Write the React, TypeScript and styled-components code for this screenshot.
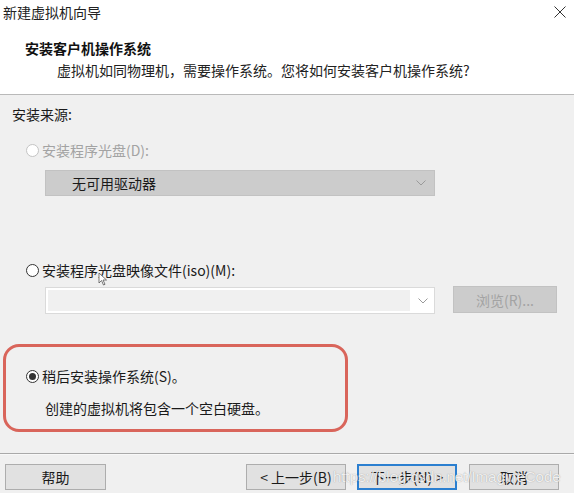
import React from "react";
import styled, { createGlobalStyle } from "styled-components";

const Global = createGlobalStyle`
  html, body { margin: 0; padding: 0; background: #f0f0f0; }
  body {
    font-family: "Noto Sans CJK SC", "Liberation Sans", sans-serif;
    font-size: 14px;
    color: #1a1a1a;
  }
  * { box-sizing: border-box; }
`;

const Window = styled.div`
  position: relative;
  width: 574px;
  height: 493px;
  display: flex;
  flex-direction: column;
  background: #f0f0f0;
  overflow: hidden;
`;

const Header = styled.div`
  height: 95px;
  background: #ffffff;
  display: flex;
  flex-direction: column;
  border-bottom: 1px solid #b9b9b9;
`;

const TitleBar = styled.div`
  height: 24px;
  display: flex;
  align-items: center;
  justify-content: space-between;
  padding: 0 8px 0 3px;
`;

const TitleText = styled.span`
  font-size: 14px;
  line-height: 18px;
  color: #222;
`;

const Heading = styled.div`
  margin-top: 14px;
  padding-left: 25px;
  font-size: 14px;
  font-weight: bold;
  line-height: 20px;
  color: #111;
`;

const Subtitle = styled.div`
  margin-top: 3px;
  padding-left: 57px;
  line-height: 18px;
  color: #222;
`;

const Body = styled.div`
  display: flex;
  flex-direction: column;
  flex: 1;
`;

const SectionLabel = styled.div`
  margin-top: 10px;
  padding-left: 12px;
  line-height: 18px;
`;

const OptionRow = styled.label<{ $mt: number; $pl?: number; $disabled?: boolean }>`
  display: flex;
  align-items: center;
  gap: 3px;
  margin-top: ${(p) => p.$mt}px;
  padding-left: ${(p) => p.$pl ?? 26}px;
  line-height: 18px;
  color: ${(p) => (p.$disabled ? "#a3a3a3" : "#1a1a1a")};
`;

const Radio = styled.span<{ $checked?: boolean; $disabled?: boolean }>`
  width: 13px;
  height: 13px;
  flex: none;
  border-radius: 50%;
  background: #fff;
  border: 1px solid ${(p) => (p.$disabled ? "#c4c4c4" : "#333")};
  display: flex;
  align-items: center;
  justify-content: center;
  &::after {
    content: "";
    width: 7px;
    height: 7px;
    border-radius: 50%;
    background: ${(p) => (p.$checked ? "#333" : "transparent")};
  }
`;

const Select = styled.div`
  margin: 11px 0 0 45px;
  width: 390px;
  height: 26px;
  display: flex;
  align-items: center;
  justify-content: space-between;
  padding: 0 8px 0 26px;
  background: #cccccc;
  border: 1px solid #c2c2c2;
  color: #1a1a1a;
`;

const ComboRow = styled.div`
  display: flex;
  align-items: flex-start;
  margin-top: 8px;
  padding-left: 45px;
`;

const Combo = styled.div`
  width: 390px;
  height: 27px;
  display: flex;
  align-items: stretch;
  background: #fff;
  border: 1px solid #dadada;
  padding: 2px;
`;

const ComboField = styled.div`
  flex: 1;
  background: #f0f0f0;
  margin-right: 4px;
`;

const ComboArrow = styled.div`
  width: 18px;
  display: flex;
  align-items: center;
  justify-content: center;
`;

const BrowseButton = styled.div`
  margin: -1px 0 0 18px;
  width: 104px;
  height: 27px;
  display: flex;
  align-items: center;
  justify-content: center;
  background: #cccccc;
  border: 1px solid #c2c2c2;
  color: #a3a3a3;
`;

const Highlight = styled.div`
  margin: 30px 0 0 3px;
  width: 345px;
  height: 88px;
  border: 3px solid #d9655b;
  border-radius: 16px;
  display: flex;
  flex-direction: column;
  padding-top: 20px;
`;

const Note = styled.div`
  margin-top: 14px;
  padding-left: 39px;
  line-height: 18px;
`;

const Divider = styled.div`
  margin-top: 21px;
  height: 2px;
  border-top: 1px solid #a9a9a9;
  border-bottom: 1px solid #f8f8f8;
`;

const Footer = styled.div`
  display: flex;
  margin-top: 9px;
  padding: 0 15px 0 5px;
`;

const Button = styled.div<{ $w: number; $ml?: number; $primary?: boolean }>`
  width: ${(p) => p.$w}px;
  height: 26px;
  margin-left: ${(p) => p.$ml ?? 0}px;
  display: flex;
  align-items: center;
  justify-content: center;
  background: #e1e1e1;
  border: ${(p) => (p.$primary ? "2px solid #2b7fd0" : "1px solid #adadad")};
  color: #1a1a1a;
  line-height: 18px;
`;

const Watermark = styled.div`
  position: absolute;
  left: 333px;
  top: 468px;
  font-family: "Liberation Sans", sans-serif;
  font-size: 15px;
  line-height: 18px;
  color: rgba(255, 255, 255, 0.85);
  text-shadow: 0 0 1px rgba(110, 110, 110, 0.7);
  white-space: nowrap;
  pointer-events: none;
`;

const Cursor = styled.svg`
  position: absolute;
  left: 98px;
  top: 272px;
`;

const Chevron = ({ color = "#9a9a9a" }: { color?: string }) => (
  <svg width="10" height="6" viewBox="0 0 10 6">
    <path d="M0.5 0.5 L5 5 L9.5 0.5" fill="none" stroke={color} strokeWidth="1" />
  </svg>
);

export default function App() {
  return (
    <>
      <Global />
      <Window>
        <Header>
          <TitleBar>
            <TitleText>新建虚拟机向导</TitleText>
            <svg width="12" height="12" viewBox="0 0 12 12">
              <path d="M0.5 0.5 L11.5 11.5 M11.5 0.5 L0.5 11.5" stroke="#333" strokeWidth="1" />
            </svg>
          </TitleBar>
          <Heading>安装客户机操作系统</Heading>
          <Subtitle>虚拟机如同物理机，需要操作系统。您将如何安装客户机操作系统?</Subtitle>
        </Header>
        <Body>
          <SectionLabel>安装来源:</SectionLabel>
          <OptionRow $mt={18} $disabled>
            <Radio $disabled />
            安装程序光盘(D):
          </OptionRow>
          <Select>
            <span>无可用驱动器</span>
            <Chevron />
          </Select>
          <OptionRow $mt={65}>
            <Radio />
            安装程序光盘映像文件(iso)(M):
          </OptionRow>
          <ComboRow>
            <Combo>
              <ComboField />
              <ComboArrow>
                <Chevron />
              </ComboArrow>
            </Combo>
            <BrowseButton>浏览(R)...</BrowseButton>
          </ComboRow>
          <Highlight>
            <OptionRow $mt={0} $pl={20}>
              <Radio $checked />
              稍后安装操作系统(S)。
            </OptionRow>
            <Note>创建的虚拟机将包含一个空白硬盘。</Note>
          </Highlight>
          <Divider />
          <Footer>
            <Button $w={101}>帮助</Button>
            <Button $w={100} $ml={140}>&lt; 上一步(B)</Button>
            <Button $w={100} $ml={11} $primary>下一步(N) &gt;</Button>
            <Button $w={90} $ml={12}>取消</Button>
          </Footer>
        </Body>
        <Cursor width="10" height="14" viewBox="0 0 10 14">
          <path d="M1 1 L1 11 L3.5 8.5 L5.5 13 L7 12.3 L5 8 L8.5 8 Z" fill="#fff" stroke="#555" strokeWidth="0.8" />
        </Cursor>
        <Watermark>https://blog.csdn.net/ImagineCode</Watermark>
      </Window>
    </>
  );
}
